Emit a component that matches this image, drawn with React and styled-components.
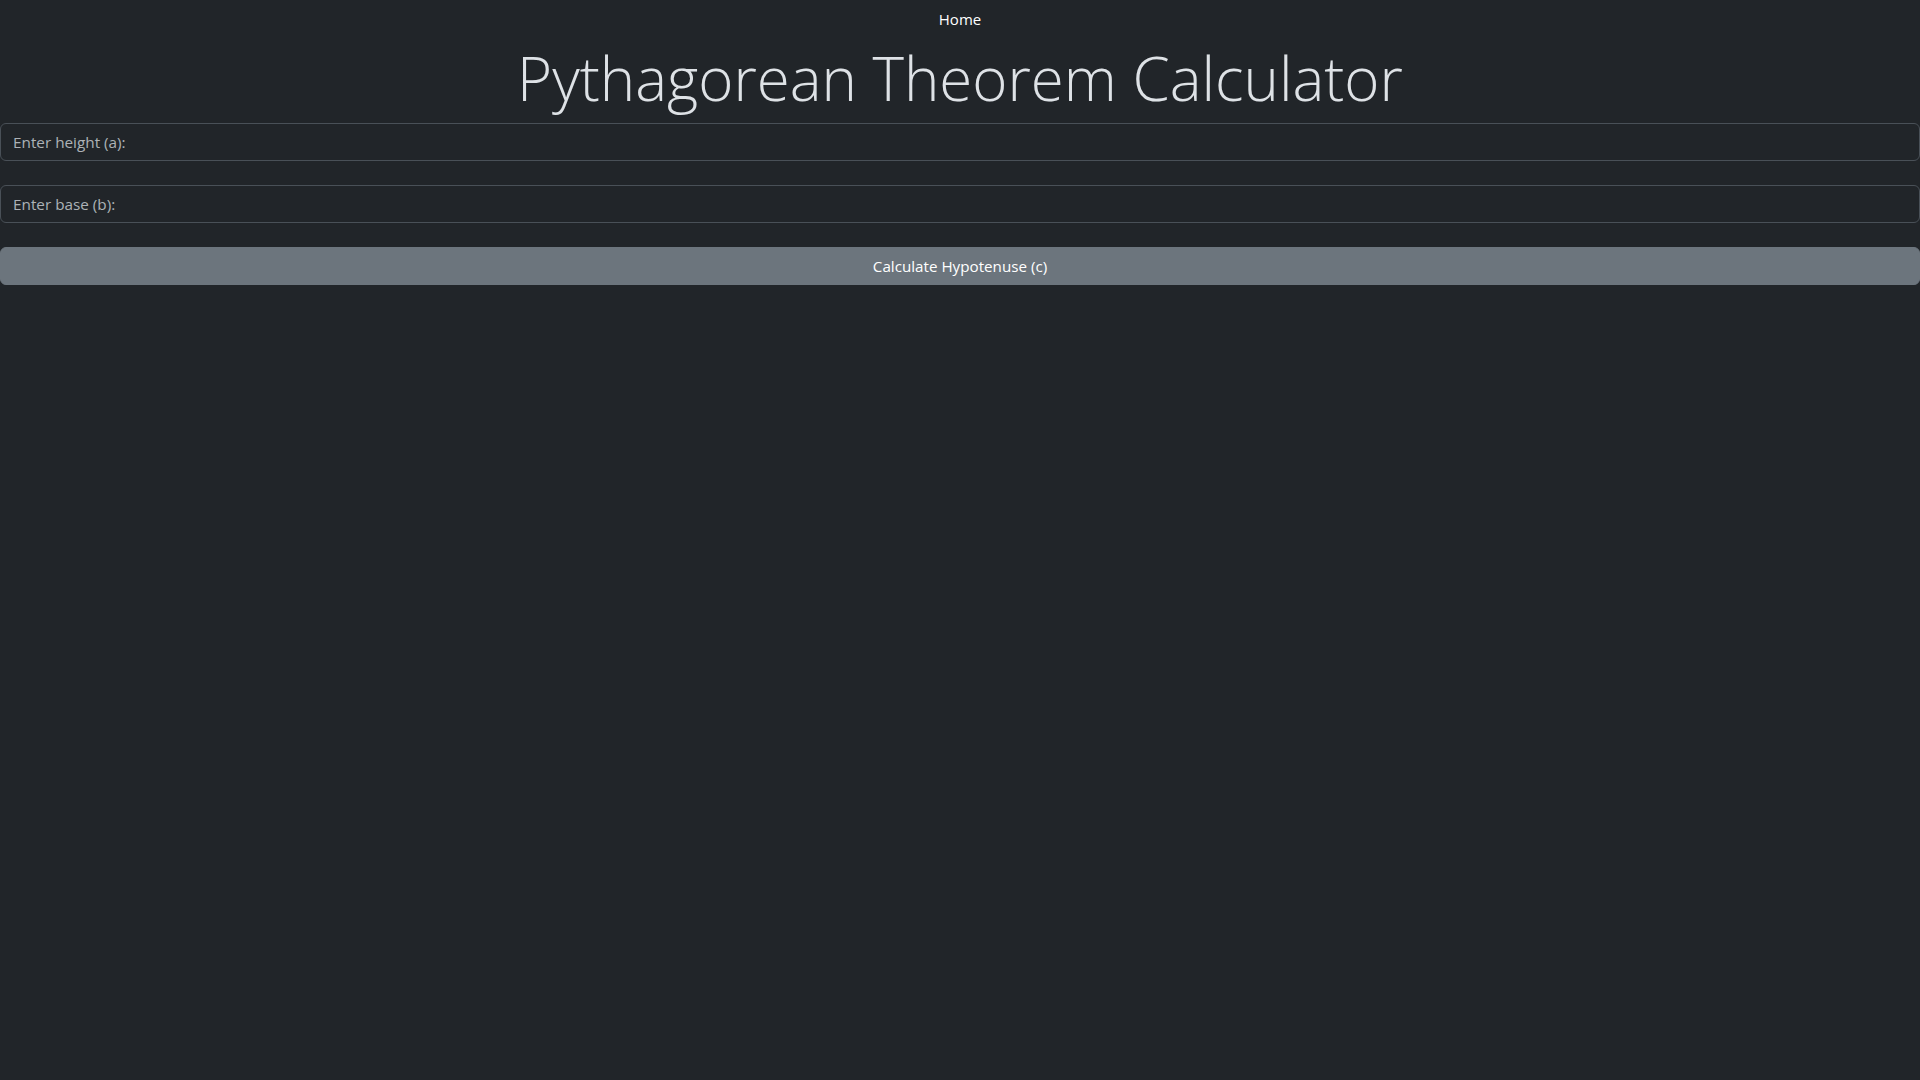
import React from "react";
import styled, { createGlobalStyle } from "styled-components";

const Global = createGlobalStyle`
  html, body { margin: 0; padding: 0; background: #212529; }
  body {
    color: #dee2e6;
    font-family: "Open Sans", "Noto Sans", sans-serif;
    font-size: 16px;
    line-height: 1.5;
    min-height: 1080px;
  }
  * { box-sizing: border-box; }
`;

const Page = styled.div`
  min-height: 1080px;
  background: #212529;
`;

const Nav = styled.nav`
  display: flex;
  justify-content: center;
  padding: 7px 0 8px;
`;

const NavLink = styled.a`
  color: #ffffff;
  text-decoration: none;
  font-size: 15px;
  line-height: 24px;
`;

const Title = styled.h1`
  margin: 3px 0 9px;
  text-align: center;
  font-family: "Open Sans", sans-serif;
  font-weight: 300;
  font-size: 60px;
  line-height: 1.2;
  color: #dee2e6;
`;

const Form = styled.form`
  display: flex;
  flex-direction: column;
  gap: 24px;
`;

const Input = styled.input`
  display: block;
  width: 100%;
  height: 38px;
  padding: 6px 12px;
  font-family: "Open Sans", sans-serif;
  font-size: 15.3px;
  color: #dee2e6;
  background: #212529;
  border: 1px solid #495057;
  border-radius: 6px;
  outline: none;
  &::placeholder {
    color: rgba(222, 226, 230, 0.75);
  }
`;

const Button = styled.button`
  display: block;
  width: 100%;
  height: 38px;
  padding: 6px 12px;
  font-family: "Open Sans", sans-serif;
  font-size: 15.2px;
  color: #ffffff;
  background: #6c757d;
  border: 1px solid #6c757d;
  border-radius: 6px;
  cursor: pointer;
`;

export default function App() {
  return (
    <Page>
      <Global />
      <Nav>
        <NavLink href="#">Home</NavLink>
      </Nav>
      <Title>Pythagorean Theorem Calculator</Title>
      <Form onSubmit={(e) => e.preventDefault()}>
        <Input type="number" placeholder="Enter height (a):" />
        <Input type="number" placeholder="Enter base (b):" />
        <Button type="submit">Calculate Hypotenuse (c)</Button>
      </Form>
    </Page>
  );
}
